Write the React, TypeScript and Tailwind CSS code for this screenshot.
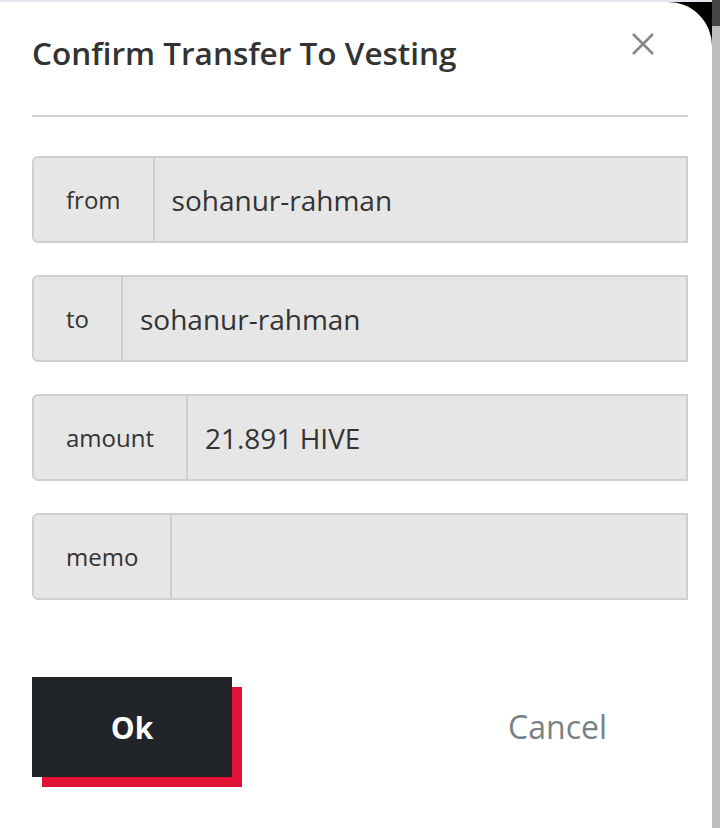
import React from "react";

const FONT = { fontFamily: "'Open Sans', Lato, sans-serif" };

function Field({ label, value }: { label: string; value: string }) {
  return (
    <div className="flex h-[87px] rounded-l-[6px] border-2 border-[#cfcfcf] bg-[#e6e6e6]">
      <div className="flex items-center border-r-2 border-[#cfcfcf] px-[32px] text-[24px] text-[#333]">
        {label}
      </div>
      <div className="flex flex-1 items-center px-[17px] text-[28px] text-[#333]">{value}</div>
    </div>
  );
}

export default function App() {
  return (
    <div className="flex h-[828px] w-[720px] overflow-hidden bg-white" style={FONT}>
      <div className="flex flex-1 flex-col bg-black">
        <div className="h-[2px] bg-[#e6e6f0]" />
        <div className="flex flex-1 flex-col rounded-tr-[44px] bg-white pl-[32px] pr-[24px]">
          <div className="flex items-start justify-between pt-[30px]">
            <h1 className="text-[31.5px] font-semibold leading-[42px] text-[#333]">
              Confirm Transfer To Vesting
            </h1>
            <button className="mr-[33px] mt-[0px] text-[#888]">
              <svg width="24" height="24" viewBox="0 0 24 24" fill="none" stroke="currentColor" strokeWidth="2.6">
                <path d="M2 2 L22 22 M22 2 L2 22" />
              </svg>
            </button>
          </div>
          <div className="mt-[41px] h-[2px] bg-[#d0d0d0]" />
          <div className="mt-[39px] flex flex-col gap-[32px]">
            <Field label="from" value="sohanur-rahman" />
            <Field label="to" value="sohanur-rahman" />
            <Field label="amount" value="21.891 HIVE" />
            <Field label="memo" value="" />
          </div>
          <div className="mt-[77px] flex items-center justify-between">
            <button className="flex h-[100px] w-[200px] items-center justify-center bg-[#212529] text-[30px] font-bold text-white shadow-[10px_10px_0_#e31337]">
              Ok
            </button>
            <button className="mr-[81px] text-[32px] text-[#788187]">Cancel</button>
          </div>
        </div>
      </div>
      <div className="flex w-[8px] flex-col bg-[#bdbdbd]">
        <div className="h-[26px] bg-[#444]" />
      </div>
    </div>
  );
}
